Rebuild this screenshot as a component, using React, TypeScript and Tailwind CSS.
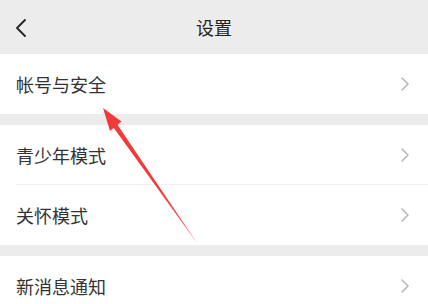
import React from "react";

const Chevron = () => (
  <svg width="10" height="16" viewBox="0 0 10 16" className="shrink-0">
    <path d="M2 2 L8 8 L2 14" fill="none" stroke="#b8b8b8" strokeWidth="1.6" strokeLinecap="round" strokeLinejoin="round" />
  </svg>
);

const Row = ({ label, h, divider }: { label: string; h: string; divider?: boolean }) => (
  <div className={`relative flex items-center justify-between bg-white pl-4 pr-[18px] ${h}`}>
    <span className="text-[18px] text-[#333333]">{label}</span>
    <Chevron />
    {divider && <div className="absolute bottom-0 left-4 right-0 h-px bg-[#f0f0f0]" />}
  </div>
);

export default function App() {
  return (
    <div
      className="relative h-[304px] w-[428px] overflow-hidden bg-[#ececec]"
      style={{ fontFamily: '"Noto Sans CJK SC", "Noto Sans", sans-serif' }}
    >
      <div className="relative flex h-[54px] items-center justify-center bg-[#ececec]">
        <svg width="14" height="20" viewBox="0 0 14 20" className="absolute left-[14px] top-[18px]">
          <path d="M11 2 L3 10 L11 18" fill="none" stroke="#222" strokeWidth="1.8" strokeLinecap="round" strokeLinejoin="round" />
        </svg>
        <span className="text-[18px] text-[#222222]">设置</span>
      </div>
      <Row label="帐号与安全" h="h-[60px]" />
      <div className="h-[11px]" />
      <Row label="青少年模式" h="h-[60px]" divider />
      <Row label="关怀模式" h="h-[60px]" />
      <div className="h-[11px]" />
      <Row label="新消息通知" h="h-[60px]" />
      <svg className="pointer-events-none absolute left-0 top-0" width="428" height="304" viewBox="0 0 428 304">
        <polygon points="116,122.6 112,125.4 197,243" fill="#f23a3a" />
        <polygon points="103,108 121.5,121.5 110,131" fill="#f23a3a" />
      </svg>
    </div>
  );
}
